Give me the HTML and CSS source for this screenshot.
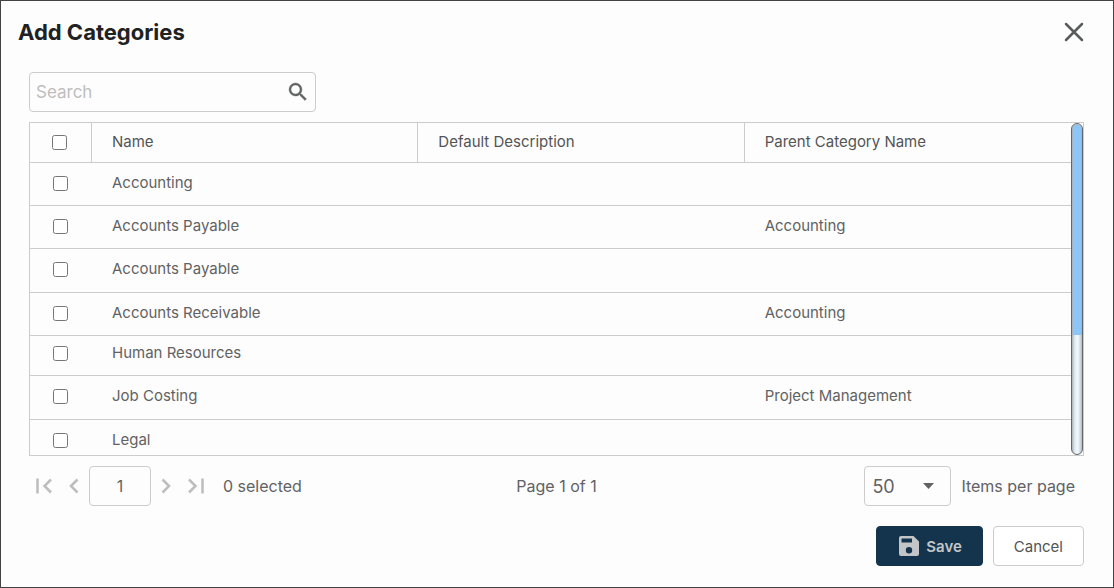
FILE: index.html
```html
<!DOCTYPE html>
<html lang="en">
<head>
    <meta charset="UTF-8">
    <meta name="viewport" content="width=device-width, initial-scale=1.0">
    <title>Add Categories</title>
    <link rel="stylesheet" href="styles.css">
</head>
<body>
    <div class="dialog" role="dialog" aria-labelledby="dialog-title">
        <header class="dialog-header">
            <h1 id="dialog-title">Add Categories</h1>
            <button type="button" class="icon-button close" aria-label="Close">
                <svg width="20" height="20" viewBox="0 0 20 20"><path d="M2 2L18 18M18 2L2 18" fill="none" stroke="#5a5b5c" stroke-width="2.5" stroke-linecap="round"/></svg>
            </button>
        </header>

        <main class="content">
            <div class="search">
                <input type="text" class="search-input" placeholder="Search" aria-label="Search">
                <button type="button" class="icon-button" aria-label="Run search">
                    <svg width="24" height="24" viewBox="0 0 24 24"><path fill="#616263" stroke="#616263" stroke-width="0.4" d="M15.5 14h-.79l-.28-.27A6.47 6.47 0 0 0 16 9.5 6.5 6.5 0 1 0 9.5 16c1.61 0 3.09-.59 4.23-1.57l.27.28v.79l5 4.99L20.49 19l-4.99-5zm-6 0C7.01 14 5 11.99 5 9.5S7.01 5 9.5 5 14 7.01 14 9.5 11.99 14 9.5 14z"/></svg>
                </button>
            </div>

            <div class="grid">
                <div class="grid-body">
                    <table class="categories">
                        <thead>
                            <tr>
                                <th class="check-col"><input type="checkbox" aria-label="Select all"></th>
                                <th>Name</th>
                                <th>Default Description</th>
                                <th>Parent Category Name</th>
                            </tr>
                        </thead>
                        <tbody>
                            <tr>
                                <td class="check-col"><input type="checkbox" id="cat1"></td>
                                <td><label for="cat1">Accounting</label></td>
                                <td></td>
                                <td></td>
                            </tr>
                            <tr>
                                <td class="check-col"><input type="checkbox" id="cat2"></td>
                                <td><label for="cat2">Accounts Payable</label></td>
                                <td></td>
                                <td>Accounting</td>
                            </tr>
                            <tr>
                                <td class="check-col"><input type="checkbox" id="cat3"></td>
                                <td><label for="cat3">Accounts Payable</label></td>
                                <td></td>
                                <td></td>
                            </tr>
                            <tr>
                                <td class="check-col"><input type="checkbox" id="cat4"></td>
                                <td><label for="cat4">Accounts Receivable</label></td>
                                <td></td>
                                <td>Accounting</td>
                            </tr>
                            <tr class="compact">
                                <td class="check-col"><input type="checkbox" id="cat5"></td>
                                <td><label for="cat5">Human Resources</label></td>
                                <td></td>
                                <td></td>
                            </tr>
                            <tr>
                                <td class="check-col"><input type="checkbox" id="cat6"></td>
                                <td><label for="cat6">Job Costing</label></td>
                                <td></td>
                                <td>Project Management</td>
                            </tr>
                            <tr>
                                <td class="check-col"><input type="checkbox" id="cat7"></td>
                                <td><label for="cat7">Legal</label></td>
                                <td></td>
                                <td></td>
                            </tr>
                        </tbody>
                    </table>
                </div>
                <div class="scroll-track"><div class="scroll-thumb"></div></div>
            </div>

            <div class="pager">
                <div class="pager-group">
                    <button type="button" class="icon-button" aria-label="First page">
                        <svg width="30" height="20" viewBox="0 0 30 20"><path d="M8.500 2.500V17.500M22 3.500L15.500 10L22 16.500" fill="none" stroke="#bdbdbd" stroke-width="2.500"/></svg>
                    </button>
                    <button type="button" class="icon-button" aria-label="Previous page">
                        <svg width="30" height="20" viewBox="0 0 30 20"><path d="M18.500 3.500L12 10L18.500 16.500" fill="none" stroke="#bdbdbd" stroke-width="2.500"/></svg>
                    </button>
                    <input type="text" class="page-input" value="1" aria-label="Page number">
                    <button type="button" class="icon-button" aria-label="Next page">
                        <svg width="30" height="20" viewBox="0 0 30 20"><path d="M11.500 3.500L18 10L11.500 16.500" fill="none" stroke="#bdbdbd" stroke-width="2.500"/></svg>
                    </button>
                    <button type="button" class="icon-button" aria-label="Last page">
                        <svg width="30" height="20" viewBox="0 0 30 20"><path d="M8 3.500L14.500 10L8 16.500M21.500 2.500V17.500" fill="none" stroke="#bdbdbd" stroke-width="2.500"/></svg>
                    </button>
                    <span class="selected-count">0 selected</span>
                </div>
                <span>Page 1 of 1</span>
                <div class="pager-group page-size">
                    <div class="select-wrap">
                        <select id="pageSize">
                            <option>10</option>
                            <option>25</option>
                            <option selected>50</option>
                            <option>100</option>
                        </select>
                        <svg class="select-arrow" width="11" height="6" viewBox="0 0 11 6"><path d="M0 0H11L5.500 6z" fill="#616263"/></svg>
                    </div>
                    <label for="pageSize">Items per page</label>
                </div>
            </div>

            <footer class="actions">
                <button type="button" class="btn btn-primary">
                    <svg width="20" height="20" viewBox="0 0 20 20"><path fill="#c3c5c7" fill-rule="evenodd" d="M2 0H14.500L20 5.500V18a2 2 0 0 1-2 2H2a2 2 0 0 1-2-2V2a2 2 0 0 1 2-2zM2.500 2.500V6.500H13V2.500zM10 11a3.200 3.200 0 1 0 0 6.400 3.200 3.200 0 0 0 0-6.400z"/></svg>
                    Save
                </button>
                <button type="button" class="btn">Cancel</button>
            </footer>
        </main>
    </div>
</body>
</html>
```
FILE: styles.css
```css
* {
    box-sizing: border-box;
}

body {
    margin: 0;
    font-family: Inter, "Liberation Sans", Arial, sans-serif;
    font-size: 15px;
    color: #616263;
}

.dialog {
    display: flex;
    flex-direction: column;
    height: 100vh;
    border: 1px solid #434344;
    background-color: #fdfdfd;
}

.dialog-header {
    display: flex;
    justify-content: space-between;
    align-items: center;
    height: 61px;
    padding: 0 29px 0 17px;
}

h1 {
    margin: 0;
    font-size: 22px;
    font-weight: 700;
    color: #202122;
}

input, select, button {
    font: inherit;
    color: inherit;
}

.icon-button {
    display: flex;
    padding: 0;
    border: none;
    background: none;
    cursor: pointer;
}

.content {
    display: flex;
    flex: 1;
    flex-direction: column;
    gap: 10px;
    min-height: 0;
    padding: 10px 29px 21px 28px;
}

.search {
    display: flex;
    align-items: center;
    width: 287px;
    height: 40px;
    padding: 0 5px 0 6px;
    border: 1px solid #ccc;
    border-radius: 4px;
}

.search-input {
    flex: 1;
    min-width: 0;
    padding: 0;
    border: none;
    outline: none;
    background: none;
    font-size: 17px;
}

.search-input::placeholder {
    color: #bdbdbd;
}

.grid {
    display: flex;
    flex: 1;
    min-height: 0;
    border: 1px solid #ccc;
}

.grid-body {
    flex: 1;
    overflow: hidden;
}

.categories {
    width: 100%;
    table-layout: fixed;
    border-collapse: separate;
    border-spacing: 0;
}

.categories th,
.categories td {
    padding: 0 20px 2px;
    border-bottom: 1px solid #ccc;
    text-align: left;
}

.categories th {
    height: 40px;
    border-right: 1px solid #ccc;
    font-weight: 400;
    color: #535455;
}

.categories th:last-child {
    border-right: none;
}

.categories td {
    height: 43px;
    padding-bottom: 4px;
}

.categories tr:nth-child(3n) td {
    height: 44px;
}

.categories .compact td {
    height: 40px;
    padding-bottom: 6px;
}

.categories .check-col {
    width: 62px;
    padding-left: 0;
    padding-right: 2px;
    text-align: center;
}

.categories input {
    width: 15px;
    height: 15px;
    margin: 0;
    vertical-align: middle;
}

.scroll-track {
    width: 12px;
    overflow: hidden;
    border: 1px solid #666;
    border-radius: 6px;
    background: linear-gradient(to right, #aab4b8, #e4eff5 30%, #f0f8fd 60%, #b4bec2);
}

.scroll-thumb {
    height: 64%;
    border: solid #a5b4c0;
    border-width: 1px 1px 0;
    border-radius: 6px 6px 0 0;
    background-color: #8cc5f8;
}

.pager {
    display: grid;
    grid-template-columns: 1fr auto 1fr;
    align-items: center;
    font-size: 16px;
}

.pager-group {
    display: flex;
    align-items: center;
}

.page-input {
    width: 62px;
    height: 40px;
    border: 1px solid #ccc;
    border-radius: 4px;
    background: none;
    text-align: center;
}

.selected-count {
    margin-left: 12px;
}

.page-size {
    gap: 10px;
    justify-content: flex-end;
    padding-right: 9px;
}

.select-wrap {
    position: relative;
}

.select-wrap select {
    width: 87px;
    height: 40px;
    padding: 0 7px;
    border: 1px solid #ccc;
    border-radius: 4px;
    background: none;
    font-size: 18px;
    appearance: none;
}

.select-arrow {
    position: absolute;
    top: 17px;
    right: 17px;
    pointer-events: none;
}

.actions {
    display: flex;
    justify-content: flex-end;
    gap: 10px;
    padding-top: 10px;
}

.btn {
    display: flex;
    align-items: center;
    gap: 7px;
    height: 40px;
    padding: 0 20px;
    border: 1px solid #ccc;
    border-radius: 4px;
    background-color: #fff;
    color: #535455;
    cursor: pointer;
}

.btn-primary {
    padding-left: 22px;
    border-color: #14344d;
    background-color: #14344d;
    color: #c3c5c7;
    font-weight: 600;
}
```
